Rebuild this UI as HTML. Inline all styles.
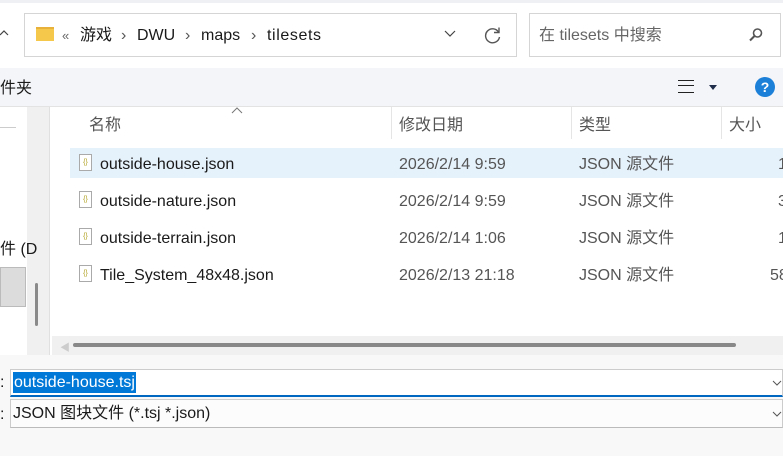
<!DOCTYPE html>
<html><head><meta charset="utf-8"><style>
*{margin:0;padding:0;box-sizing:border-box}
body{width:783px;height:456px;overflow:hidden;background:#fff;font-family:"Liberation Sans","Noto Sans CJK SC",sans-serif;font-size:16px;line-height:20px;color:#1a1a1a;position:relative}
.a{position:absolute;white-space:nowrap}
.row{position:absolute;left:70px;width:713px;height:30px}
.row span{position:absolute;top:7px;white-space:nowrap;line-height:20px}
.ic{position:absolute;left:9px;top:6px;width:13px;height:17px;border:1px solid #aaa;background:#fff;font-size:7px;color:#b0a020;text-align:center;line-height:15px}
.g{color:#555}
</style></head><body>
<div class="a" style="left:0;top:0;width:783px;height:3px;background:#eef0f4"></div>
<svg class="a" style="left:0;top:28px" width="10" height="10"><path d="M0 7 L4 3 L8 7" fill="none" stroke="#444" stroke-width="1.2"/></svg>
<div class="a" style="left:24px;top:13px;width:493px;height:44px;border:1px solid #d5d5d5;background:#fff"></div>
<div class="a" style="left:36px;top:27px;width:18px;height:14px;background:#f5c84c;border-top:2px solid #e8b23a"></div>
<div class="a" style="left:62px;top:26px;font-size:13px;color:#666">«</div>
<div class="a" style="left:80px;top:26px">游戏</div>
<div class="a g" style="left:121px;top:26px">›</div>
<div class="a" style="left:137px;top:26px">DWU</div>
<div class="a g" style="left:185px;top:26px">›</div>
<div class="a" style="left:201px;top:26px">maps</div>
<div class="a g" style="left:251px;top:26px">›</div>
<div class="a" style="left:267px;top:26px;letter-spacing:0.6px">tilesets</div>
<svg class="a" style="left:444px;top:30px" width="12" height="8"><path d="M1 1 L6 6 L11 1" fill="none" stroke="#444" stroke-width="1.2"/></svg>
<svg class="a" style="left:484px;top:26px" width="18" height="18"><path d="M14.5 6 A7 7 0 1 0 15.5 11" fill="none" stroke="#555" stroke-width="1.4"/><path d="M15 1.5 L15 6.5 L10 6.5" fill="none" stroke="#555" stroke-width="1.4"/></svg>
<div class="a" style="left:529px;top:13px;width:252px;height:44px;border:1px solid #d5d5d5;background:#fff"></div>
<div class="a" style="left:539px;top:26px;color:#666">在 tilesets 中搜索</div>
<svg class="a" style="left:748px;top:27px" width="16" height="16"><circle cx="9.5" cy="6" r="4" fill="none" stroke="#555" stroke-width="1.6"/><path d="M6.5 9 L2 13.5" stroke="#555" stroke-width="2"/></svg>
<div class="a" style="left:0;top:68px;width:783px;height:38px;background:#f3f5f8"></div>
<div class="a" style="left:0;top:79px">件夹</div>
<div class="a" style="left:678px;top:80px;width:16px;height:13px;border-top:1.5px solid #222;border-bottom:1.5px solid #222"><div style="margin-top:4px;border-top:1.5px solid #222"></div></div>
<div class="a" style="left:709px;top:85px;border:4px solid transparent;border-top:5px solid #1f2d4a"></div>
<div class="a" style="left:755px;top:77px;width:20px;height:20px;border-radius:50%;background:#1c7fd8;color:#fff;font-size:14px;font-weight:bold;text-align:center;line-height:20px">?</div>
<div class="a" style="left:0;top:106px;width:783px;height:1px;background:#e3e3e3"></div>
<div class="a" style="left:27px;top:107px;width:22px;height:248px;background:#f0f0f0"></div>
<div class="a" style="left:49px;top:107px;width:1px;height:248px;background:#e0e0e0"></div>
<div class="a" style="left:0;top:127px;width:16px;height:1px;background:#ccc"></div>
<div class="a" style="left:0;top:240px">件 (D</div>
<div class="a" style="left:0;top:267px;width:26px;height:40px;background:#dcdcdc;border:1px solid #bbb"></div>
<div class="a" style="left:35px;top:283px;width:3px;height:43px;background:#8a8a8a;border-radius:2px"></div>
<svg class="a" style="left:231px;top:107px" width="12" height="8"><path d="M1 6 L6 1 L11 6" fill="none" stroke="#777" stroke-width="1"/></svg>
<div class="a g" style="left:89px;top:116px">名称</div>
<div class="a" style="left:391px;top:107px;width:1px;height:32px;background:#e5e5e5"></div>
<div class="a g" style="left:399px;top:116px">修改日期</div>
<div class="a" style="left:571px;top:107px;width:1px;height:32px;background:#e5e5e5"></div>
<div class="a g" style="left:579px;top:116px">类型</div>
<div class="a" style="left:721px;top:107px;width:1px;height:32px;background:#e5e5e5"></div>
<div class="a g" style="left:729px;top:116px">大小</div>
<div class="row" style="top:148px;background:#e5f1fb"><div class="ic">{}</div><span style="left:30px">outside-house.json</span><span class="g" style="left:329px">2026/2/14 9:59</span><span class="g" style="left:509px">JSON 源文件</span><span class="g" style="left:708px">1</span></div>
<div class="row" style="top:185px"><div class="ic">{}</div><span style="left:30px">outside-nature.json</span><span class="g" style="left:329px">2026/2/14 9:59</span><span class="g" style="left:509px">JSON 源文件</span><span class="g" style="left:708px">3</span></div>
<div class="row" style="top:222px"><div class="ic">{}</div><span style="left:30px">outside-terrain.json</span><span class="g" style="left:329px">2026/2/14 1:06</span><span class="g" style="left:509px">JSON 源文件</span><span class="g" style="left:708px">1</span></div>
<div class="row" style="top:259px"><div class="ic">{}</div><span style="left:30px">Tile_System_48x48.json</span><span class="g" style="left:329px">2026/2/13 21:18</span><span class="g" style="left:509px">JSON 源文件</span><span class="g" style="left:700px">58</span></div>
<div class="a" style="left:52px;top:336px;width:731px;height:19px;background:#f0f0f0"></div>
<div class="a" style="left:60px;top:339px;color:#ccc;font-size:10px">◀</div>
<div class="a" style="left:73px;top:343px;width:663px;height:4px;background:#888;border-radius:2px"></div>
<div class="a" style="left:0;top:355px;width:783px;height:101px;background:#f8f8f8"></div>
<div class="a" style="left:0;top:373px">:</div>
<div class="a" style="left:10px;top:369px;width:773px;height:28px;background:#fff;border:1px solid #ccc;border-bottom:2px solid #0067c0"></div>
<div class="a" style="left:13px;top:372px;background:#0078d7;color:#fff;padding:0 1px;line-height:21px">outside-house.tsj</div>
<svg class="a" style="left:772px;top:380px" width="10" height="6"><path d="M1 1 L5 5 L9 1" fill="none" stroke="#555" stroke-width="1"/></svg>
<div class="a" style="left:0;top:405px">:</div>
<div class="a" style="left:10px;top:399px;width:773px;height:29px;background:#fcfcfc;border:1px solid #ccc;border-bottom:1px solid #bbb"></div>
<div class="a" style="left:13px;top:404px">JSON 图块文件 (*.tsj *.json)</div>
<svg class="a" style="left:772px;top:411px" width="10" height="6"><path d="M1 1 L5 5 L9 1" fill="none" stroke="#555" stroke-width="1"/></svg>
</body></html>
